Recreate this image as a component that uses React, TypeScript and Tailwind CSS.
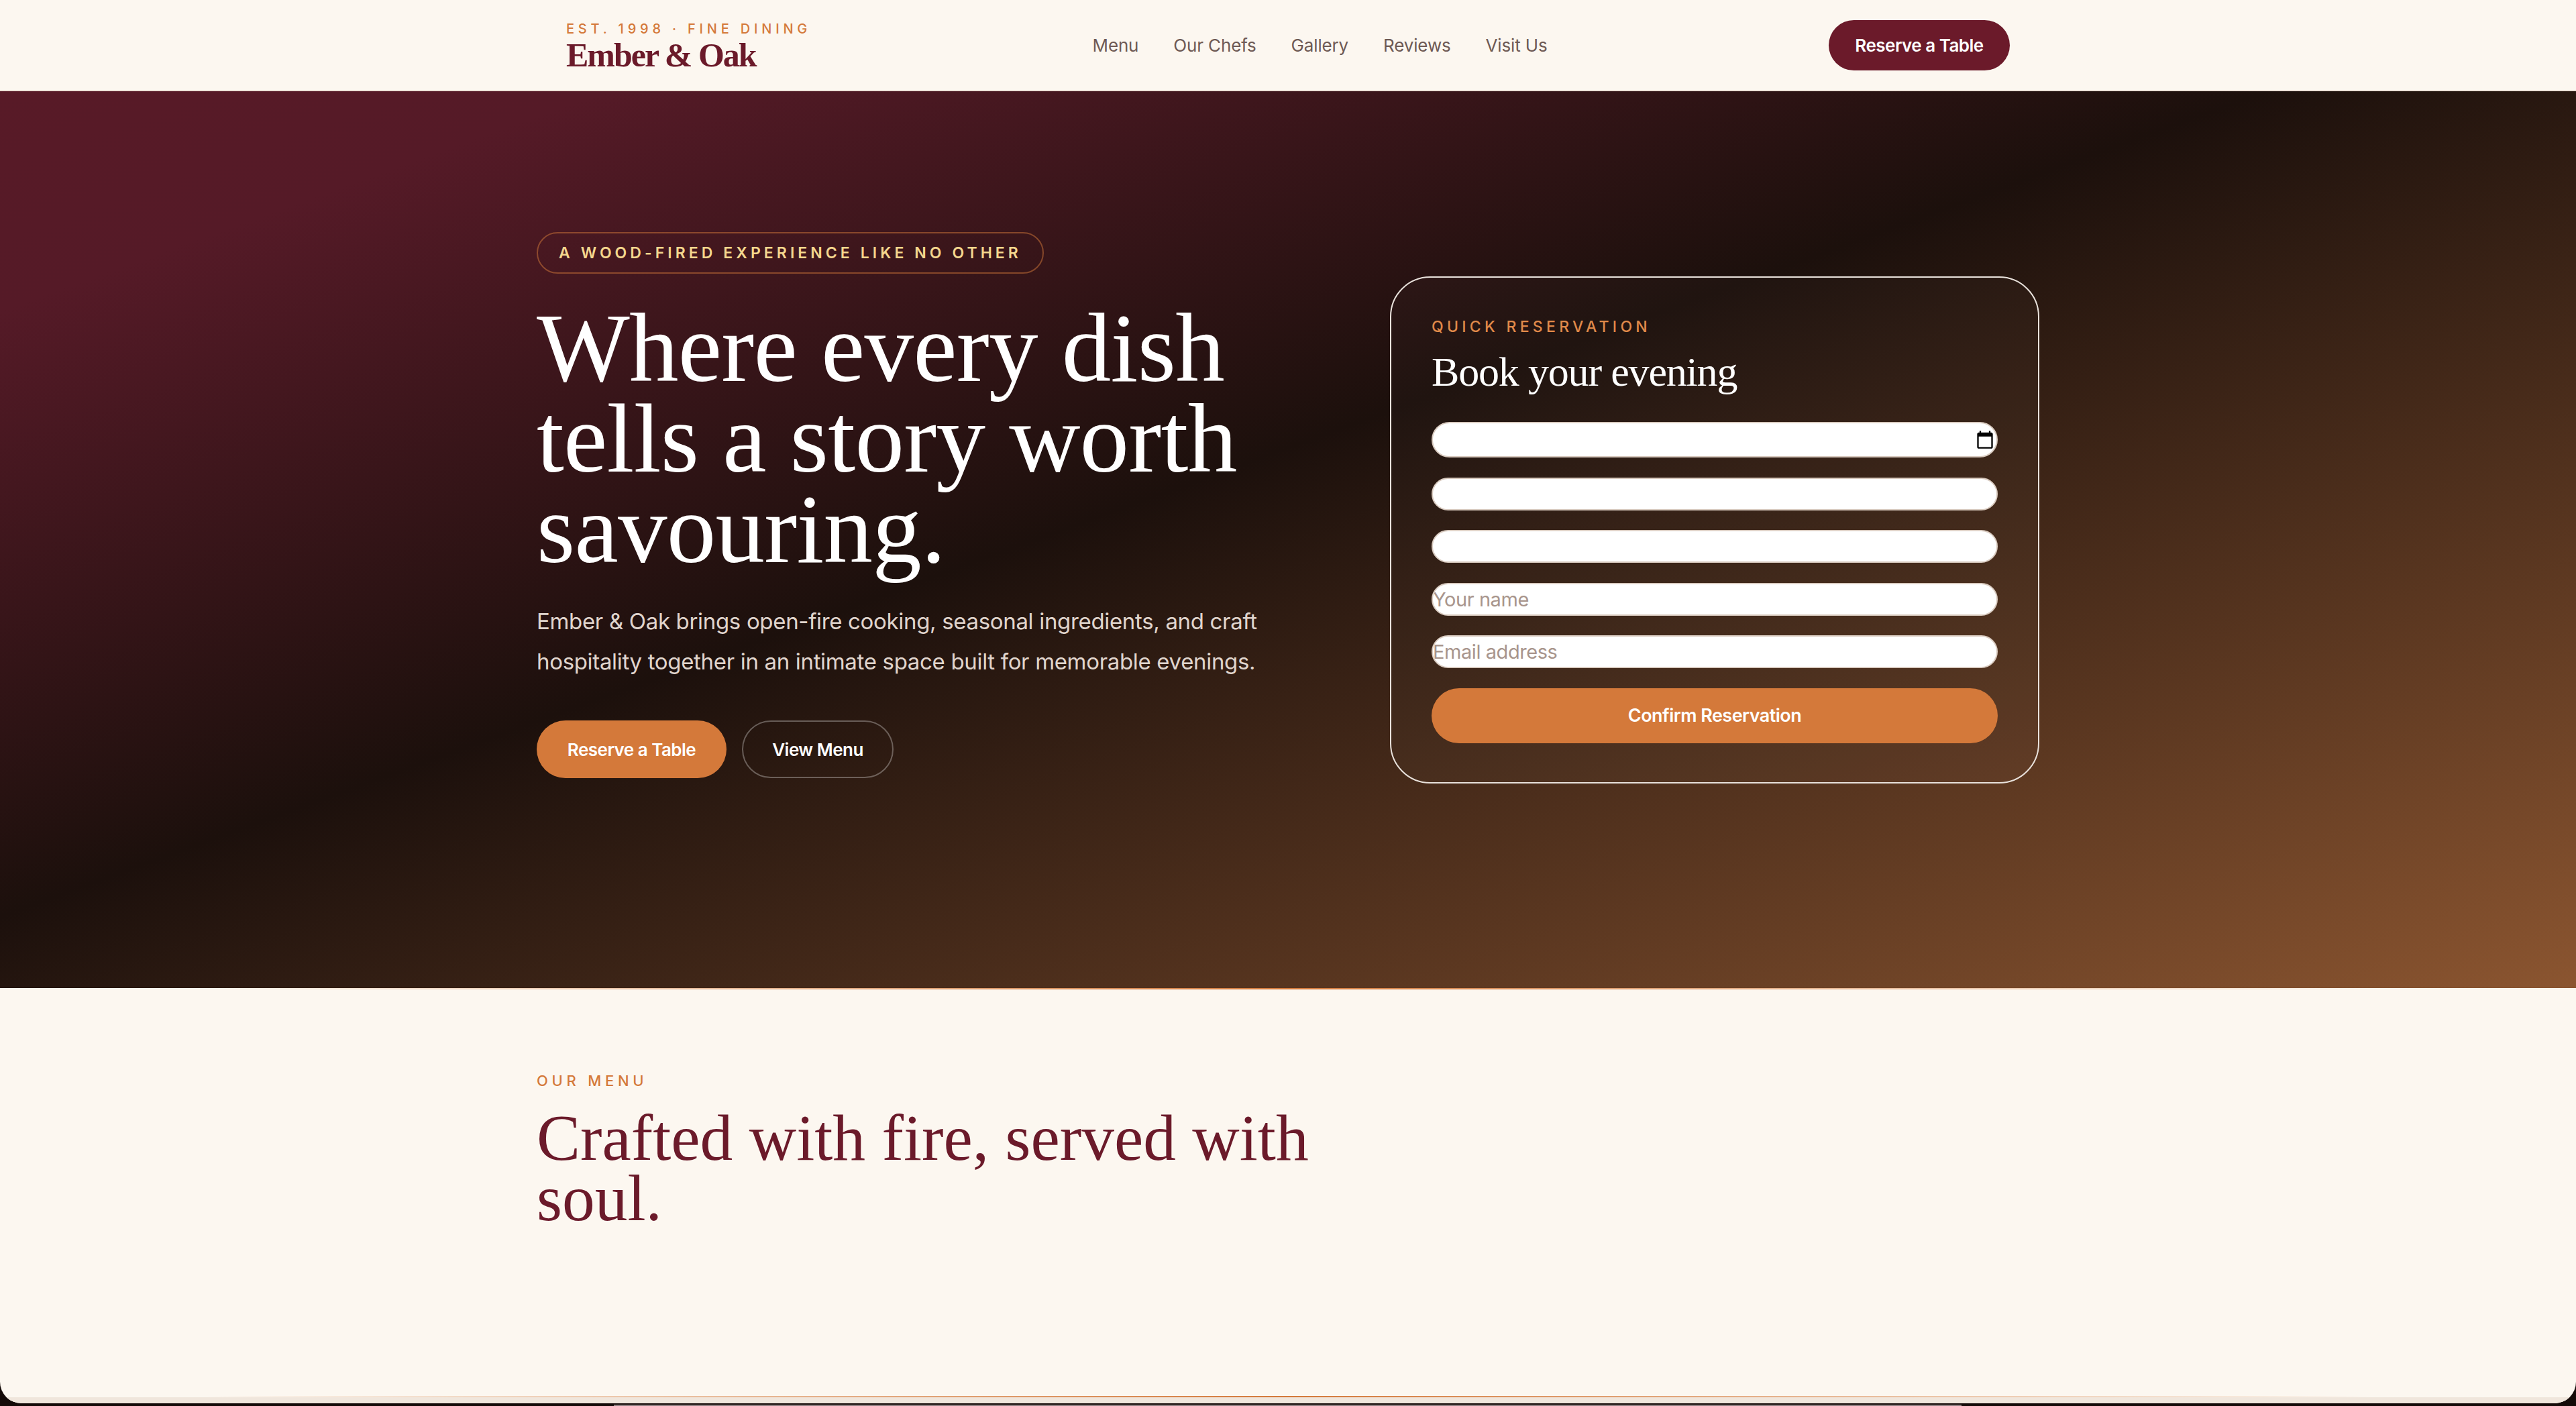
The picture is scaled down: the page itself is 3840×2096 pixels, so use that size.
import React from "react";

const navLinks = ["Menu", "Our Chefs", "Gallery", "Reviews", "Visit Us"];

const Header = () => (
  <header className="h-[136px] border-b-2 border-[#efe4da] bg-[#fcf7f0]">
    <div className="mx-auto flex h-full w-[2152px] items-center justify-between">
      <div className="flex flex-col pt-[4px]">
        <span className="text-[20px] leading-[26px] font-medium tracking-[0.29em] text-[#d4793a]">
          EST. 1998 · FINE DINING
        </span>
        <span className="font-['Liberation_Serif',serif] text-[50px] leading-[52px] font-bold tracking-[-0.04em] text-[#6b1a2a]">
          Ember &amp; Oak
        </span>
      </div>
      <nav className="flex items-center gap-[52px]">
        {navLinks.map((link) => (
          <a key={link} className="text-[26px] tracking-[-0.006em] text-[#6e5a55]">
            {link}
          </a>
        ))}
      </nav>
      <button className="h-[75px] w-[270px] rounded-full bg-[#6b1a2a] text-[26px] font-semibold tracking-[-0.02em] text-white">
        Reserve a Table
      </button>
    </div>
  </header>
);

const ReservationCard = () => (
  <form className="mt-[66px] flex h-[756px] w-[968px] shrink-0 flex-col rounded-[60px] border-2 border-[#e9e2dc] bg-white/[0.02] px-[60px] pt-[58px]">
    <span className="text-[23px] leading-[30px] font-medium tracking-[0.23em] text-[#e08a4a]">
      QUICK RESERVATION
    </span>
    <h2 className="mt-[16px] font-['Liberation_Serif',serif] text-[62px] leading-[72px] tracking-[-0.019em] text-white">
      Book your evening
    </h2>
    <div className="mt-[39px] flex flex-col gap-[29.5px]">
      <input
        type="date"
        aria-label="Date"
        className="h-[53px] w-full rounded-full border-2 border-[#d9cbc0] bg-white text-[26px] text-transparent [&::-webkit-calendar-picker-indicator]:mr-[2px] [&::-webkit-calendar-picker-indicator]:h-[30px] [&::-webkit-calendar-picker-indicator]:w-[30px] [&::-webkit-calendar-picker-indicator]:p-0"
      />
      <input aria-label="Time" className="h-[49px] w-full rounded-full border-2 border-[#d9cbc0] bg-white" />
      <input aria-label="Guests" className="h-[49px] w-full rounded-full border-2 border-[#d9cbc0] bg-white" />
      <input
        placeholder="Your name"
        className="h-[49px] w-full rounded-full border-2 border-[#d9cbc0] bg-white text-[29px] tracking-[-0.015em] placeholder:text-[#a8958c]"
      />
      <input
        placeholder="Email address"
        className="h-[49px] w-full rounded-full border-2 border-[#d9cbc0] bg-white text-[29px] tracking-[-0.015em] placeholder:text-[#a8958c]"
      />
    </div>
    <button className="mt-[30px] h-[82px] w-full rounded-full bg-[#d4793a] text-[27px] font-semibold tracking-[-0.02em] text-white">
      Confirm Reservation
    </button>
  </form>
);

const Hero = () => (
  <section className="h-[1337px] bg-[linear-gradient(160deg,#581a27_0%,#551a27_12%,#1c100c_45%,#8b5530_100%)]">
    <div className="mx-auto flex w-[2240px] items-start justify-between pt-[210px]">
      <div className="flex flex-col items-start">
        <span className="flex h-[62px] w-[756px] items-center justify-center rounded-full border-2 border-[#d4793a]/50 text-[23px] font-semibold tracking-[0.22em] text-[#f5d78e]">
          A WOOD-FIRED EXPERIENCE LIKE NO OTHER
        </span>
        <h1 className="mt-[43px] font-['Liberation_Serif',serif] text-[147px] leading-[135px] tracking-[-0.005em] text-white">
          Where every dish
          <br />
          tells a story worth
          <br />
          savouring.
        </h1>
        <p className="mt-[40px] text-[33px] leading-[60px] tracking-[-0.01em] text-[#e0d5cd]">
          Ember &amp; Oak brings open-fire cooking, seasonal ingredients, and craft
          <br />
          hospitality together in an intimate space built for memorable evenings.
        </p>
        <div className="mt-[58px] flex gap-[23px]">
          <button className="h-[86px] w-[283px] rounded-full bg-[#d4793a] text-[26px] font-semibold tracking-[-0.02em] text-white">
            Reserve a Table
          </button>
          <button className="h-[86px] w-[226px] rounded-full border-2 border-white/30 text-[26px] font-semibold tracking-[-0.02em] text-white">
            View Menu
          </button>
        </div>
      </div>
      <ReservationCard />
    </div>
  </section>
);

const MenuIntro = () => (
  <section className="mx-auto w-[2240px] pt-[123px]">
    <span className="block text-[22px] leading-[26px] font-medium tracking-[0.26em] text-[#d4793a]">
      OUR MENU
    </span>
    <h2 className="mt-[27px] font-['Liberation_Serif',serif] text-[97.5px] leading-[90px] text-[#6b1a2a]">
      Crafted with fire, served with
      <br />
      soul.
    </h2>
  </section>
);

const accentLine = "h-[2px] bg-[linear-gradient(90deg,transparent_8%,#d4793a_50%,transparent_92%)]";

export default function App() {
  return (
    <div className="h-[2096px] overflow-hidden bg-[#140a08] font-[Inter,sans-serif]">
      <div className="flex h-[2092px] flex-col overflow-hidden rounded-b-[32px] bg-[#fcf7f0]">
        <Header />
        <Hero />
        <div className={accentLine} />
        <div className="flex-1">
          <MenuIntro />
        </div>
        <div className={accentLine} />
        <div className="h-[9px] bg-[#f0e6dc]" />
      </div>
      <div className="mt-[2px] ml-[915px] h-[2px] w-[2009px] bg-[#8f7f80]" />
    </div>
  );
}
